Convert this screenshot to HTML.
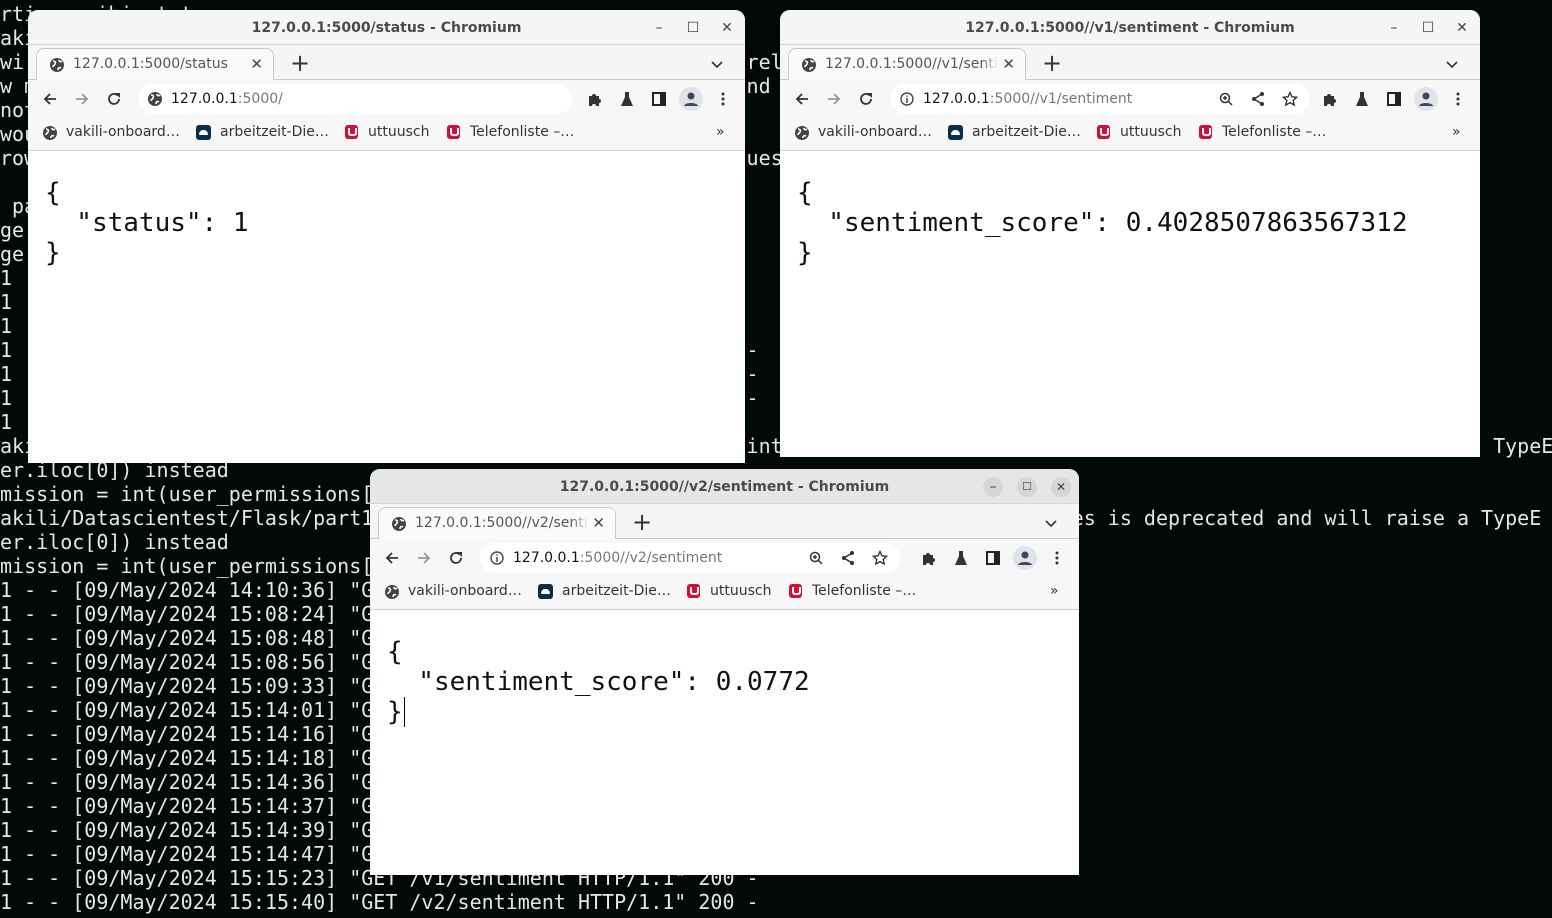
<!DOCTYPE html>
<html><head><meta charset="utf-8"><style>
*{margin:0;padding:0;box-sizing:border-box}
body{width:1552px;height:918px;background:#030808;overflow:hidden;position:relative;font-family:"Liberation Sans",sans-serif}
.term{position:absolute;left:0px;top:2px;font:20px/24px "DejaVu Sans Mono",monospace;color:#e6e6e6;white-space:pre}
.win{position:absolute;background:#f7f7f7;border-radius:10px 10px 0 0;overflow:hidden}
.tb{position:absolute;left:0;right:0;top:0;height:35px;text-align:center;font:bold 14px/36px "DejaVu Sans",sans-serif;color:#4a4a4a;border-bottom:1px solid #d6d6d6;background:#f5f5f5}
.wc{position:absolute;top:8px;width:20px;height:20px;font:14px/20px "DejaVu Sans";color:#444;text-align:center}
.strip{position:absolute;left:0;right:0;top:35px;height:35px;border-bottom:1px solid #c8c8c8;background:#f5f5f5}
.tab{position:absolute;left:8px;top:3px;width:238px;height:33px;background:#fafafa;border:1px solid #c8c8c8;border-bottom:none;border-radius:8px 8px 0 0;font:14px/30px "DejaVu Sans",sans-serif;color:#555;padding-left:36px;white-space:nowrap;overflow:hidden}
.tab .fade{position:absolute;right:0;top:0;width:44px;height:32px;background:linear-gradient(90deg,rgba(250,250,250,0),#fafafa 40%)}
.tab .x{position:absolute;right:10px;top:0;color:#444;font-size:15px}
.plus{position:absolute;left:262px;top:4px;font:24px/28px "DejaVu Sans";color:#333}
.chev{position:absolute;top:11px}
.toolbar{position:absolute;left:0;right:0;top:70px;height:36px;background:#f7f7f7}
.omni{position:absolute;left:110px;top:4px;height:30px;background:#fff;border-radius:15px;font:14px/30px "DejaVu Sans",sans-serif;color:#777;padding-left:33px;white-space:nowrap}
.omni b{font-weight:normal;color:#111}
.bm{position:absolute;left:0;right:0;top:106px;height:35px;border-bottom:1px solid #cfcfcf;background:#f7f7f7;font:14px/32px "DejaVu Sans",sans-serif;color:#333;white-space:nowrap}
.bm span{position:absolute;top:0}
.content{position:absolute;left:0;right:0;top:141px;bottom:0;background:#fff;font:26px/30px "DejaVu Sans Mono",monospace;color:#111;white-space:pre;padding:27px 0 0 17px}
.ic{position:absolute}
.u{display:inline-block;width:13px;height:14px;background:#d0103a;border-radius:3px;position:absolute;top:9px}
.u:after{content:"";position:absolute;left:3px;top:3px;width:5px;height:6px;border:2px solid #fff;border-top:none;border-radius:0 0 3px 3px}
.cl{display:inline-block;width:15px;height:15px;background:#0d2a4f;border-radius:3px;position:absolute;top:9px}
.cl:after{content:"";position:absolute;left:3px;top:5px;width:9px;height:5px;background:#fff;border-radius:5px 5px 1px 1px}
</style></head><body>
<div class="term">rti     ibi  t t
aki
wi                                                            rel
w m                                                           nd
not
wou
row                                                           ues

 pa
ge
ge
1
1
1
1                                                             -
1                                                             -
1                                                             -
1
aki                                                           int                                                           TypeE
er.iloc[0]) instead
mission = int(user_permissions[
akili/Datascientest/Flask/part1                                                          es is deprecated and will raise a TypeE
er.iloc[0]) instead
mission = int(user_permissions[
1 - - [09/May/2024 14:10:36] "G
1 - - [09/May/2024 15:08:24] "G
1 - - [09/May/2024 15:08:48] "G
1 - - [09/May/2024 15:08:56] "G
1 - - [09/May/2024 15:09:33] "G
1 - - [09/May/2024 15:14:01] "G
1 - - [09/May/2024 15:14:16] "G
1 - - [09/May/2024 15:14:18] "G
1 - - [09/May/2024 15:14:36] "G
1 - - [09/May/2024 15:14:37] "G
1 - - [09/May/2024 15:14:39] "G
1 - - [09/May/2024 15:14:47] "G
1 - - [09/May/2024 15:15:23] "GET /v1/sentiment HTTP/1.1" 200 -
1 - - [09/May/2024 15:15:40] "GET /v2/sentiment HTTP/1.1" 200 -</div>

<svg width="0" height="0" style="position:absolute"><defs>
<symbol id="globe" viewBox="0 0 16 16"><circle cx="8" cy="8" r="7" fill="#444"/><path d="M4 4c2 0 3 1 2 3s-2 1-2 3M10 3c0 2 2 2 3 1M9 13c0-2 1-3 3-2" stroke="#fff" stroke-width="1.6" fill="none"/></symbol>
<symbol id="back" viewBox="0 0 16 16"><path d="M14 8H3M8 3L3 8l5 5" stroke="#333" stroke-width="1.8" fill="none"/></symbol>
<symbol id="fwd" viewBox="0 0 16 16"><path d="M2 8h11M8 3l5 5-5 5" stroke="#999" stroke-width="1.8" fill="none"/></symbol>
<symbol id="rel" viewBox="0 0 16 16"><path d="M13 8a5 5 0 1 1-1.5-3.6" stroke="#333" stroke-width="1.8" fill="none"/><path d="M9 2h5v5z" fill="#333"/></symbol>
<symbol id="puz" viewBox="0 0 16 16"><path d="M2 5h3a2 2 0 1 1 4 0h3v3a2 2 0 1 1 0 4v3H9a2 2 0 1 0-4 0H2z" fill="#333"/></symbol>
<symbol id="lab" viewBox="0 0 16 16"><path d="M6 1h4v5l4 9H2l4-9z" fill="#333"/></symbol>
<symbol id="side" viewBox="0 0 16 16"><rect x="2" y="2" width="12" height="12" fill="none" stroke="#222" stroke-width="2"/><rect x="9" y="2" width="5" height="12" fill="#222"/></symbol>
<symbol id="prof" viewBox="0 0 24 24"><circle cx="12" cy="12" r="12" fill="#dfe3ea"/><circle cx="12" cy="9" r="3.5" fill="#445"/><path d="M5 19c1-4 13-4 14 0z" fill="#445"/></symbol>
<symbol id="dots" viewBox="0 0 16 16"><circle cx="8" cy="3" r="1.5" fill="#333"/><circle cx="8" cy="8" r="1.5" fill="#333"/><circle cx="8" cy="13" r="1.5" fill="#333"/></symbol>
<symbol id="zoom" viewBox="0 0 16 16"><circle cx="7" cy="7" r="4.5" fill="none" stroke="#333" stroke-width="1.5"/><path d="M10 10l4 4M5 7h4M7 5v4" stroke="#333" stroke-width="1.5"/></symbol>
<symbol id="share" viewBox="0 0 16 16"><circle cx="12" cy="3" r="2" fill="#333"/><circle cx="4" cy="8" r="2" fill="#333"/><circle cx="12" cy="13" r="2" fill="#333"/><path d="M12 3L4 8l8 5" stroke="#333" stroke-width="1.5" fill="none"/></symbol>
<symbol id="star" viewBox="0 0 16 16"><path d="M8 1.5l2 4.3 4.6.5-3.4 3.1 1 4.6L8 11.7 3.8 14l1-4.6L1.4 6.3 6 5.8z" fill="none" stroke="#333" stroke-width="1.4"/></symbol>
<symbol id="info" viewBox="0 0 16 16"><circle cx="8" cy="8" r="6" fill="none" stroke="#444" stroke-width="1.4"/><path d="M8 7v5M8 4.5v1.2" stroke="#444" stroke-width="1.5"/></symbol>
<symbol id="chev" viewBox="0 0 16 16"><path d="M3 6l5 5 5-5" stroke="#333" stroke-width="1.6" fill="none"/></symbol>
</defs></svg>

<!-- Window 1 -->
<div class="win" style="left:28px;top:10px;width:717px;height:453px">
  <div class="tb">127.0.0.1:5000/status - Chromium</div>
  <div class="wc" style="left:621px">–</div><div class="wc" style="left:655px">☐</div><div class="wc" style="left:689px">✕</div>
  <div class="strip"><div class="tab"><svg class="ic" style="left:12px;top:8px" width="16" height="16"><use href="#globe"/></svg>127.0.0.1:5000/status<span class="x">✕</span></div>
  <div class="plus">+</div><svg class="chev" style="left:681px" width="16" height="16"><use href="#chev"/></svg></div>
  <div class="toolbar">
    <svg class="ic" style="left:14px;top:11px" width="16" height="16"><use href="#back"/></svg>
    <svg class="ic" style="left:46px;top:11px" width="16" height="16"><use href="#fwd"/></svg>
    <svg class="ic" style="left:78px;top:11px" width="16" height="16"><use href="#rel"/></svg>
    <div class="omni" style="width:434px"><svg class="ic" style="left:9px;top:7px" width="16" height="16"><use href="#globe"/></svg><b>127.0.0.1</b>:5000/</div>
    <svg class="ic" style="left:559px;top:11px" width="16" height="16"><use href="#puz"/></svg>
    <svg class="ic" style="left:591px;top:11px" width="16" height="16"><use href="#lab"/></svg>
    <svg class="ic" style="left:623px;top:11px" width="16" height="16"><use href="#side"/></svg>
    <svg class="ic" style="left:651px;top:7px" width="24" height="24"><use href="#prof"/></svg>
    <svg class="ic" style="left:687px;top:11px" width="16" height="16"><use href="#dots"/></svg>
  </div>
  <div class="bm">
    <svg class="ic" style="left:14px;top:9px" width="16" height="16"><use href="#globe"/></svg><span style="left:38px">vakili-onboard…</span>
    <i class="cl" style="left:168px"></i><span style="left:192px">arbeitzeit-Die…</span>
    <i class="u" style="left:317px"></i><span style="left:340px">uttuusch</span>
    <i class="u" style="left:419px"></i><span style="left:442px">Telefonliste –…</span>
    <span style="left:688px">»</span>
  </div>
  <div class="content">{
  "status": 1
}</div>
</div>

<!-- Window 2 -->
<div class="win" style="left:780px;top:10px;width:700px;height:447px">
  <div class="tb">127.0.0.1:5000//v1/sentiment - Chromium</div>
  <div class="wc" style="left:604px">–</div><div class="wc" style="left:638px">☐</div><div class="wc" style="left:672px">✕</div>
  <div class="strip"><div class="tab">127.0.0.1:5000//v1/sentiment<svg class="ic" style="left:12px;top:8px" width="16" height="16"><use href="#globe"/></svg><span class="fade"></span><span class="x">✕</span></div>
  <div class="plus">+</div><svg class="chev" style="left:664px" width="16" height="16"><use href="#chev"/></svg></div>
  <div class="toolbar">
    <svg class="ic" style="left:14px;top:11px" width="16" height="16"><use href="#back"/></svg>
    <svg class="ic" style="left:46px;top:11px" width="16" height="16"><use href="#fwd"/></svg>
    <svg class="ic" style="left:78px;top:11px" width="16" height="16"><use href="#rel"/></svg>
    <div class="omni" style="width:420px"><svg class="ic" style="left:9px;top:7px" width="16" height="16"><use href="#info"/></svg><b>127.0.0.1</b>:5000//v1/sentiment
      <svg class="ic" style="left:328px;top:7px" width="16" height="16"><use href="#zoom"/></svg>
      <svg class="ic" style="left:360px;top:7px" width="16" height="16"><use href="#share"/></svg>
      <svg class="ic" style="left:392px;top:7px" width="16" height="16"><use href="#star"/></svg></div>
    <svg class="ic" style="left:542px;top:11px" width="16" height="16"><use href="#puz"/></svg>
    <svg class="ic" style="left:574px;top:11px" width="16" height="16"><use href="#lab"/></svg>
    <svg class="ic" style="left:606px;top:11px" width="16" height="16"><use href="#side"/></svg>
    <svg class="ic" style="left:634px;top:7px" width="24" height="24"><use href="#prof"/></svg>
    <svg class="ic" style="left:670px;top:11px" width="16" height="16"><use href="#dots"/></svg>
  </div>
  <div class="bm">
    <svg class="ic" style="left:14px;top:9px" width="16" height="16"><use href="#globe"/></svg><span style="left:38px">vakili-onboard…</span>
    <i class="cl" style="left:168px"></i><span style="left:192px">arbeitzeit-Die…</span>
    <i class="u" style="left:317px"></i><span style="left:340px">uttuusch</span>
    <i class="u" style="left:419px"></i><span style="left:442px">Telefonliste –…</span>
    <span style="left:672px">»</span>
  </div>
  <div class="content">{
  "sentiment_score": 0.4028507863567312
}</div>
</div>

<!-- Window 3 -->
<div class="win" style="left:370px;top:469px;width:709px;height:406px">
  <div class="tb" style="background:#e6e6e6">127.0.0.1:5000//v2/sentiment - Chromium</div>
  <div class="wc" style="left:613px;background:#d6d6d6;border-radius:50%">–</div><div class="wc" style="left:647px;background:#d6d6d6;border-radius:50%;font-size:11px">☐</div><div class="wc" style="left:681px;background:#d6d6d6;border-radius:50%;font-size:12px">✕</div>
  <div class="strip"><div class="tab">127.0.0.1:5000//v2/sentiment<svg class="ic" style="left:12px;top:8px" width="16" height="16"><use href="#globe"/></svg><span class="fade"></span><span class="x">✕</span></div>
  <div class="plus">+</div><svg class="chev" style="left:673px" width="16" height="16"><use href="#chev"/></svg></div>
  <div class="toolbar">
    <svg class="ic" style="left:14px;top:11px" width="16" height="16"><use href="#back"/></svg>
    <svg class="ic" style="left:46px;top:11px" width="16" height="16"><use href="#fwd"/></svg>
    <svg class="ic" style="left:78px;top:11px" width="16" height="16"><use href="#rel"/></svg>
    <div class="omni" style="width:420px"><svg class="ic" style="left:9px;top:7px" width="16" height="16"><use href="#info"/></svg><b>127.0.0.1</b>:5000//v2/sentiment
      <svg class="ic" style="left:328px;top:7px" width="16" height="16"><use href="#zoom"/></svg>
      <svg class="ic" style="left:360px;top:7px" width="16" height="16"><use href="#share"/></svg>
      <svg class="ic" style="left:392px;top:7px" width="16" height="16"><use href="#star"/></svg></div>
    <svg class="ic" style="left:551px;top:11px" width="16" height="16"><use href="#puz"/></svg>
    <svg class="ic" style="left:583px;top:11px" width="16" height="16"><use href="#lab"/></svg>
    <svg class="ic" style="left:615px;top:11px" width="16" height="16"><use href="#side"/></svg>
    <svg class="ic" style="left:643px;top:7px" width="24" height="24"><use href="#prof"/></svg>
    <svg class="ic" style="left:679px;top:11px" width="16" height="16"><use href="#dots"/></svg>
  </div>
  <div class="bm">
    <svg class="ic" style="left:14px;top:9px" width="16" height="16"><use href="#globe"/></svg><span style="left:38px">vakili-onboard…</span>
    <i class="cl" style="left:168px"></i><span style="left:192px">arbeitzeit-Die…</span>
    <i class="u" style="left:317px"></i><span style="left:340px">uttuusch</span>
    <i class="u" style="left:419px"></i><span style="left:442px">Telefonliste –…</span>
    <span style="left:680px">»</span>
  </div>
  <div class="content">{
  "sentiment_score": 0.0772
}<span style="border-left:1px solid #000;margin-left:1px"></span></div>
</div>
</body></html>
